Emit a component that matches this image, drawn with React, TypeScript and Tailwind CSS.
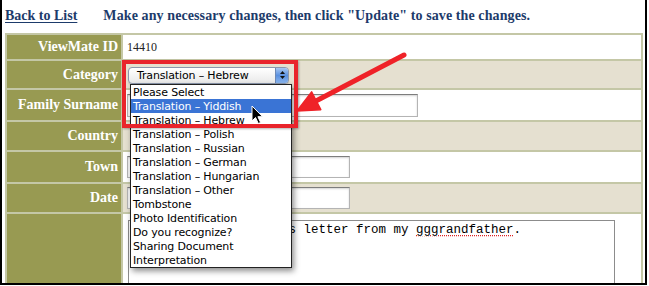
import React from "react";

const serif = { fontFamily: '"Liberation Serif", "Times New Roman", serif' };
const ui = { fontFamily: '"DejaVu Sans", "Lucida Grande", sans-serif' };
const mono = { fontFamily: '"Liberation Mono", "Courier New", monospace' };

const options = [
  "Please Select",
  "Translation – Yiddish",
  "Translation – Hebrew",
  "Translation – Polish",
  "Translation – Russian",
  "Translation – German",
  "Translation – Hungarian",
  "Translation – Other",
  "Tombstone",
  "Photo Identification",
  "Do you recognize?",
  "Sharing Document",
  "Interpretation",
];

function Label({ text }: { text: string }) {
  return (
    <div
      className="bg-[#989a52] flex items-center justify-end pr-[3px] text-white font-bold text-[14px] leading-none"
      style={serif}
    >
      {text}
    </div>
  );
}

function Input({ w, h }: { w: number; h: number }) {
  return (
    <div
      className="ml-[4px] bg-white border border-[#b4b4b4] border-t-[#7d7d7d] shadow-[inset_0_1px_2px_rgba(0,0,0,0.18)]"
      style={{ width: w, height: h }}
    />
  );
}

export default function App() {
  return (
    <div className="w-[649px] h-[286px] bg-white overflow-hidden">
      <div className="relative w-[647px] h-[285px] border-l-2 border-r-2 border-b-2 border-black overflow-hidden bg-white">
        <div
          className="flex items-center h-[33px] pb-[3px] pl-[3px] text-[14px] font-bold text-[#1d3b6b] whitespace-nowrap"
          style={serif}
        >
          <span className="underline underline-offset-2">Back to List</span>
          <span className="ml-[26px] tracking-[0.1px]">
            Make any necessary changes, then click "Update" to save the changes.
          </span>
        </div>

        <div className="ml-[3px] w-[638px] bg-[#c4c7a6] p-[2px] grid grid-cols-[114px_1fr] grid-rows-[24px_27px_30px_28px_30px_28px_100px] gap-[2px]">
          <Label text="ViewMate ID" />
          <div className="bg-white flex items-center pl-[4px] text-[12px] text-[#222]" style={serif}>
            14410
          </div>

          <Label text="Category" />
          <div className="bg-[#e5e0d0] flex items-center">
            <div
              className="ml-[5px] mt-[1px] w-[161px] h-[17px] flex items-center rounded-[4px] border border-[#8b97ad] bg-gradient-to-b from-white to-[#e9e9e9] shadow-[0_1px_1px_rgba(0,0,0,0.15)] overflow-hidden"
              style={ui}
            >
              <span className="flex-1 pl-[8px] text-[11px] tracking-[-0.15px] text-black leading-none whitespace-nowrap">
                Translation – Hebrew
              </span>
              <div className="w-[13px] h-full bg-gradient-to-b from-[#a9c8f2] via-[#5a90df] to-[#8bb6ef] border-l border-[#6d89b5] flex flex-col items-center justify-center gap-[2px]">
                <svg width="5" height="3" viewBox="0 0 5 3">
                  <path d="M2.5 0 L5 3 L0 3 Z" fill="#111" />
                </svg>
                <svg width="5" height="3" viewBox="0 0 5 3">
                  <path d="M0 0 L5 0 L2.5 3 Z" fill="#111" />
                </svg>
              </div>
            </div>
          </div>

          <Label text="Family Surname" />
          <div className="bg-white flex items-center">
            <Input w={291} h={23} />
          </div>

          <Label text="Country" />
          <div className="bg-[#e5e0d0]" />

          <Label text="Town" />
          <div className="bg-white flex items-center">
            <Input w={223} h={22} />
          </div>

          <Label text="Date" />
          <div className="bg-[#e5e0d0] flex items-center">
            <Input w={223} h={22} />
          </div>

          <div className="bg-[#989a52]" />
          <div className="bg-white pt-[6px]">
            <div
              className="ml-[5px] w-[487px] h-[90px] border border-[#8c8c8c] bg-white px-[2px] pt-[2px] text-[12.5px] leading-[15px] text-black whitespace-nowrap"
              style={mono}
            >
              Can you translate this letter from my{" "}
              <span className="underline decoration-dotted decoration-[#d22] underline-offset-2">
                gggrandfather
              </span>
              .
            </div>
          </div>
        </div>

        {/* open dropdown list */}
        <div
          className="absolute left-[128px] top-[84px] w-[162px] bg-white border border-[#222] shadow-[2px_3px_6px_rgba(0,0,0,0.45)]"
          style={ui}
        >
          {options.map((o, i) => (
            <div
              key={o}
              className={
                i === 1
                  ? "h-[14px] flex items-center pl-[2px] text-[11px] tracking-[-0.15px] leading-none whitespace-nowrap bg-[#3a74d5] text-white"
                  : "h-[14px] flex items-center pl-[2px] text-[11px] tracking-[-0.15px] leading-none whitespace-nowrap text-black"
              }
            >
              {o}
            </div>
          ))}
        </div>

        {/* red highlight box */}
        <div className="absolute left-[120px] top-[60px] w-[176px] h-[68px] border-[4px] border-[#e9242b] shadow-[1px_1px_2px_rgba(0,0,0,0.3)]" />

        {/* arrow + cursor */}
        <svg
          className="absolute left-[-2px] top-0 pointer-events-none"
          width="649"
          height="286"
          viewBox="0 0 649 286"
        >
          <line
            x1="404"
            y1="55"
            x2="314"
            y2="102"
            stroke="#ef2228"
            strokeWidth="5"
            strokeLinecap="round"
          />
          <path d="M297 111 L311.6 91.9 L320.8 109.7 Z" fill="#ef2228" stroke="#ef2228" strokeWidth="1.5" strokeLinejoin="round" />
          <path
            d="M252 106 L252 121 L255.5 117.5 L258.3 123.5 L260.6 122.5 L257.9 116.7 L262.6 116.7 Z"
            fill="#000"
            stroke="#fff"
            strokeWidth="1"
            strokeLinejoin="round"
          />
        </svg>
      </div>
    </div>
  );
}
